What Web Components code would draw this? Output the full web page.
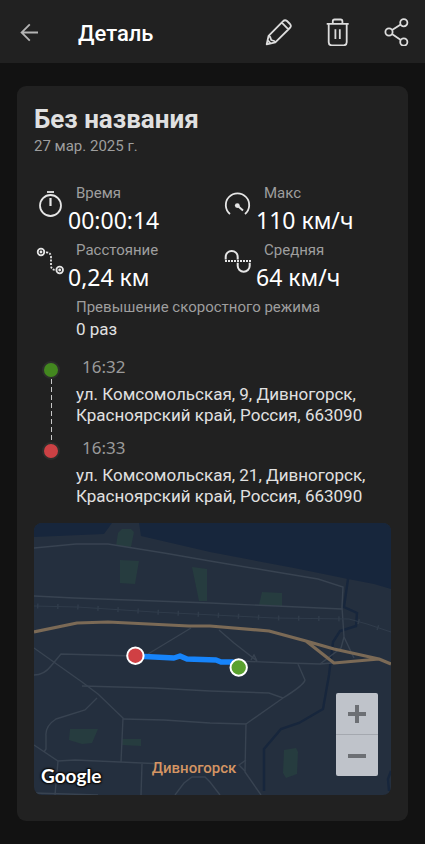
<!DOCTYPE html>
<html lang="ru">
<head>
<meta charset="utf-8">
<meta name="viewport" content="width=device-width, initial-scale=1">
<title>Деталь</title>
<style>
body {
    margin: 0;
    background: #121212;
    color: #e0e0e0;
    font-family: Roboto, "Noto Sans", sans-serif;
    font-size: 17px;
}
</style>
</head>
<body>
<trip-page></trip-page>

<template id="app-bar">
<style>
:host {
    display: flex;
    align-items: center;
    height: 63px;
    padding: 0 14px 0 15px;
    background: #212121;
}
h1 {
    flex: 1;
    margin: 4px 0 0 35px;
    font-size: 22px;
    line-height: 28px;
    font-weight: 500;
    color: #fff;
}
button {
    display: block;
    width: 28px;
    height: 28px;
    padding: 0;
    border: 0;
    background: none;
    color: #dcdcdc;
    cursor: pointer;
}
.back {
    color: #b4b4b4;
}
.actions {
    display: flex;
    gap: 31px;
}
svg {
    display: block;
    fill: none;
    stroke: currentColor;
    stroke-width: 1.8;
    stroke-linejoin: round;
}
</style>
<button class="back" aria-label="Назад">
    <svg width="28" height="28"><path d="M23 14.5H7M14.8 6.3 6.6 14.5l8.2 8.2" stroke-linejoin="miter"/></svg>
</button>
<h1><slot></slot></h1>
<div class="actions">
    <button aria-label="Изменить">
        <svg width="28" height="28"><path d="M1.7 26.3 3.6 17.8 17.9 3.3Q19.9 1.3 22 3l3 3Q26.8 8 24.8 10L10.3 24.4zM16.8 4.6l6.4 6.6M3.6 17.8l1.6 1.2 1 3 3 1 1.1 1.4M2.8 22.4l2.8 2.9"/></svg>
    </button>
    <button aria-label="Удалить">
        <svg width="28" height="28"><path d="M2.7 5.8h22M8.8 5.6V3.3q0-1.8 1.8-1.8h6q1.8 0 1.8 1.8v2.3M4.7 6v18.3q0 3 3 3h12q3 0 3-3V6M11.4 11.3V21M15.8 11.3V21"/></svg>
    </button>
    <button aria-label="Поделиться">
        <svg width="28" height="28"><circle cx="20.8" cy="4.7" r="3.6"/><circle cx="6" cy="14" r="3.6"/><circle cx="20.8" cy="24" r="3.6"/><path d="m9.1 12.1 8.6-5.5M9 16l8.8 5.9"/></svg>
    </button>
</div>
</template>

<template id="trip-card">
<style>
:host {
    display: block;
    margin: 23px 17px;
    padding: 18px 17px 26px;
    border-radius: 9px;
    background: #212121;
}
h2 {
    margin: 0;
    font-size: 26px;
    line-height: 30px;
    font-weight: 700;
}
.date {
    margin: 2px 0 28px;
    font-size: 15px;
    line-height: 20px;
    color: #9e9e9e;
}
</style>
<h2><slot name="title"></slot></h2>
<p class="date"><slot name="date"></slot></p>
<slot></slot>
</template>

<template id="trip-stat">
<style>
:host {
    display: grid;
    grid-template-columns: 34px 1fr;
}
svg {
    display: block;
    fill: none;
    stroke: #e6e6e6;
    stroke-width: 1.8;
}
.dot {
    fill: #e6e6e6;
    stroke: none;
}
.label {
    padding-left: 8px;
    font-size: 15px;
    line-height: 18px;
    color: #9e9e9e;
}
.value {
    margin-top: 4px;
    font-family: "Noto Sans", sans-serif;
    font-size: 23px;
    line-height: 28px;
    color: #fff;
}
:host([plain]) .value {
    margin-top: 3px;
    padding-left: 8px;
    font-family: inherit;
    font-size: 17px;
    line-height: 20px;
    color: #e0e0e0;
}
</style>
<div class="icon"></div>
<div>
    <div class="label"></div>
    <div class="value"><slot></slot></div>
</div>
</template>

<template id="trip-stats">
<style>
:host {
    display: grid;
    grid-template-columns: 188fr 169fr;
    row-gap: 7px;
    margin-bottom: 18px;
}
::slotted([plain]) {
    grid-column: 1 / -1;
}
</style>
<slot></slot>
</template>

<template id="trip-stop">
<style>
:host {
    display: grid;
    grid-template-columns: 34px 1fr;
    column-gap: 8px;
}
.rail {
    display: flex;
    flex-direction: column;
    align-items: center;
    padding-top: 4px;
}
.point {
    box-sizing: border-box;
    width: 18px;
    height: 18px;
    border: 2px solid #2c2e2c;
    border-radius: 50%;
    background: var(--point, #43871f);
}
.line {
    flex: 1;
    width: 1px;
    margin-bottom: -4px;
    background: repeating-linear-gradient(#c8c8c8 0 5px, transparent 5px 8px);
}
:host([last]) .line {
    display: none;
}
.text {
    padding-bottom: 12px;
}
:host([last]) .text {
    padding-bottom: 16px;
}
time {
    display: block;
    padding-left: 6px;
    font-family: "Noto Sans", sans-serif;
    line-height: 20px;
    color: #9a9a9a;
}
address {
    margin-top: 7px;
    font-style: normal;
    line-height: 21px;
}
</style>
<div class="rail"><div class="point"></div><div class="line"></div></div>
<div class="text">
    <time></time>
    <address><slot></slot></address>
</div>
</template>

<template id="trip-map">
<style>
:host {
    display: block;
    position: relative;
    overflow: hidden;
    border-radius: 8px;
    background: #242f3e;
}
svg {
    display: block;
    width: 100%;
    height: auto;
    fill: none;
}
.city, .brand, .zoom {
    position: absolute;
}
.city {
    left: 33%;
    bottom: 18px;
    font-size: 15px;
    line-height: 18px;
    font-weight: 500;
    color: #d59563;
}
.brand {
    left: 7px;
    bottom: 7px;
    font-family: Lato, sans-serif;
    font-size: 19px;
    line-height: 24px;
    font-weight: 700;
    color: #fff;
    text-shadow: 1px 1px 1px #111, -1px -1px 1px #111, 1px -1px 1px #111, -1px 1px 1px #111, 0 0 3px #111;
}
.zoom {
    right: 13px;
    bottom: 19px;
    width: 42px;
    border-radius: 2px;
    overflow: hidden;
    background: #bfc3ca;
}
button {
    display: block;
    width: 100%;
    height: 41px;
    padding: 0;
    border: 0;
    background: none;
    cursor: pointer;
}
button + button {
    height: 42px;
    border-top: 1px solid #a4a8af;
}
button svg {
    width: 20px;
    height: 20px;
    margin: 0 auto;
    stroke: #6c6f74;
    stroke-width: 4;
}
</style>
<svg viewBox="0 0 357 272" aria-hidden="true">
    <!-- river and creek -->
    <path fill="#17263c" d="M0 0H357V66L340 61 314 56 260 45 176 29 120 16 107 13 105 0H78L70 11 0 14z"/>
    <g stroke="#17263c" stroke-width="2.4">
        <path d="M314 56 310 84 323 90 322 103 306 108 299 119 295 152 289 186 265 200 247 206 230 226V268"/>
        <path d="M357 248 354 256 355 268"/>
    </g>
    <!-- parks -->
    <g fill="#263c3f">
        <path d="M84 10 88 6H97L100 9 97 24 82 23zM86 37 105 38 101 61 86 60zM158 44 173 46V78H165zM228 69 248 70V83L225 82zM36 206H64L58 220 48 221 35 217zM88 216H107V223L88 222zM250 227 262 225 264 229 263 251 252 255 249 250z"/>
    </g>
    <!-- streets -->
    <g stroke="#384351" stroke-width="1.4">
        <path d="M0 25 42 21H74L130 30 176 38 230 47 284 56 309 64 308 84 310 114 320 135"/>
        <path d="M0 73 40 75 176 80 308 86M310 114 307 125 286 141"/>
        <path d="M0 125 48 159 64 171 89 195 87 239M0 152Q10 152 17 143L27 131 101 133M114 131 157 105"/>
        <path d="M185 107 200 120 223 138 M217 137 220 132 223 138 M205 138 254 140 286 141 320 138M264 141 271 157Q270 162 249 175L212 201 211 249 227 272M249 175 235 170 176 168 120 165 48 163"/>
        <path d="M63 175 51 187 22 196Q11 203 12 213V226L10 229M0 222 24 238 41 237 130 241M24 238 21 272M108 241 107 272M0 270 64 272M89 196 130 197 176 200 212 201M141 272 150 260 158 254H171L176 259 186 272M212 237 205 242 211 248"/>
    </g>
    <!-- railway -->
    <path stroke="#303c4b" d="M0 83 43 84 120 89 240 95 315 96 333 101 357 109"/>
    <path stroke="#303c4b" stroke-width="5" stroke-dasharray="1.5 18.6" d="M3 83 43 84 120 89 240 95 315 96 333 101 357 109"/>
    <!-- highway -->
    <path stroke="#7b6a56" stroke-width="3.2" stroke-linejoin="round" d="M0 109 43 100 74 99 155 103 176 103 235 108 272 118 300 126 345 136 357 141M272 118 300 140 345 136"/>
    <!-- route -->
    <path stroke="#1684fb" stroke-width="5.4" stroke-linejoin="round" d="M101 133 140 135 146 133 153 136 182 137 187 139 199 139 205 144"/>
    <g stroke="#fff" stroke-width="2">
        <circle cx="101.4" cy="132.7" r="8.2" fill="#d04044"/>
        <circle cx="204.7" cy="144.5" r="8.2" fill="#5aa12e"/>
    </g>
</svg>
<span class="city"><slot></slot></span>
<span class="brand">Google</span>
<div class="zoom">
    <button aria-label="Приблизить"><svg viewBox="0 0 20 20"><path d="M1 10h18M10 1v18"/></svg></button>
    <button aria-label="Отдалить"><svg viewBox="0 0 20 20"><path d="M1 10h18"/></svg></button>
</div>
</template>

<template id="trip-page">
<style>
:host {
    display: block;
}
.red {
    --point: #cb4144;
}
</style>
<app-bar>Деталь</app-bar>
<trip-card>
    <span slot="title">Без названия</span>
    <span slot="date">27 мар. 2025 г.</span>
    <trip-stats>
        <trip-stat icon="timer" label="Время">00:00:14</trip-stat>
        <trip-stat icon="gauge" label="Макс">110 км/ч</trip-stat>
        <trip-stat icon="route" label="Расстояние">0,24 км</trip-stat>
        <trip-stat icon="wave" label="Средняя">64 км/ч</trip-stat>
        <trip-stat plain label="Превышение скоростного режима">0 раз</trip-stat>
    </trip-stats>
    <trip-stop time="16:32">ул. Комсомольская, 9, Дивногорск, Красноярский край, Россия, 663090</trip-stop>
    <trip-stop class="red" time="16:33" last>ул. Комсомольская, 21, Дивногорск, Красноярский край, Россия, 663090</trip-stop>
    <trip-map>Дивногорск</trip-map>
</trip-card>
</template>

<script>
const icons = {
  timer: `<circle cx="16.5" cy="21.5" r="10.5"/><path d="M13 8h7"/><path d="M16.5 14v8" stroke-width="2.2"/>`,
  gauge: `<path d="M8 30A11.7 11.7 0 1 1 23 30"/><circle class="dot" cx="15.3" cy="21.6" r="2.4"/><path d="m15.3 21.6 5.7 5" stroke-width="2"/>`,
  route: `<circle cx="7" cy="11" r="3.3"/><circle class="dot" cx="7" cy="11" r="1.4"/>
    <circle cx="25.7" cy="29" r="3.3"/><circle class="dot" cx="25.7" cy="29" r="1.4"/>
    <path d="M12 11.3q5 0 5 5v8q0 4.7 5 4.7" stroke-dasharray="2 1.4"/>`,
  wave: `<path d="M3.7 18.4v-2.5a6 6 0 0 1 12 0v2.5M15.7 21.8v3a6 6 0 0 0 12 0v-3" stroke-width="2"/><path d="M3 20h26" stroke-dasharray="2 1"/>`
};

class BaseElement extends HTMLElement {
  constructor() {
    super();
    const template = document.getElementById(this.localName);
    this.attachShadow({ mode: "open" }).appendChild(template.content.cloneNode(true));
  }
  find(selector) {
    return this.shadowRoot.querySelector(selector);
  }
}

class TripStat extends BaseElement {
  connectedCallback() {
    const icon = icons[this.getAttribute("icon")];
    this.find(".label").textContent = this.getAttribute("label");
    if (icon) {
      this.find(".icon").innerHTML = `<svg width="32" height="42">${icon}</svg>`;
    }
  }
}

class TripStop extends BaseElement {
  connectedCallback() {
    this.find("time").textContent = this.getAttribute("time");
  }
}

customElements.define("app-bar", class extends BaseElement {});
customElements.define("trip-card", class extends BaseElement {});
customElements.define("trip-stats", class extends BaseElement {});
customElements.define("trip-stat", TripStat);
customElements.define("trip-stop", TripStop);
customElements.define("trip-map", class extends BaseElement {});
customElements.define("trip-page", class extends BaseElement {});
</script>
</body>
</html>
